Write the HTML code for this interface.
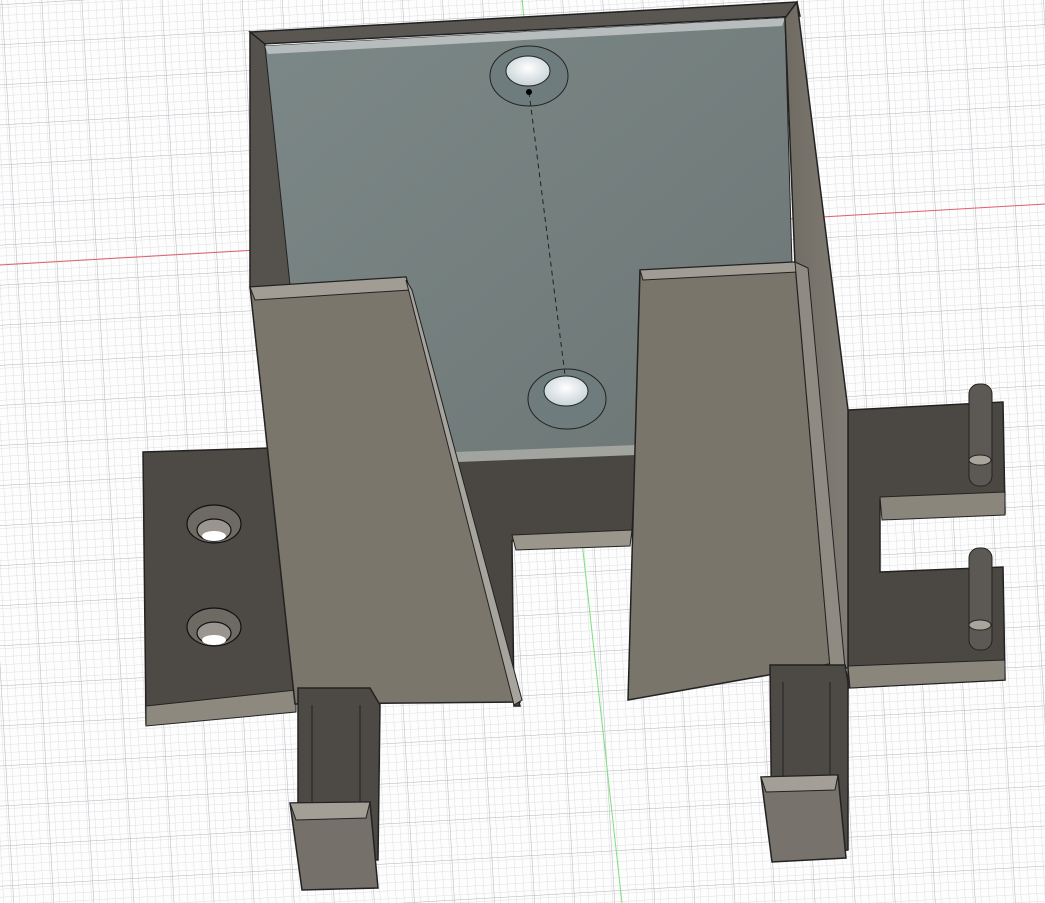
<!DOCTYPE html>
<html><head><meta charset="utf-8"><style>
html,body{margin:0;padding:0;background:#fff;}
svg{display:block}
</style></head><body>
<svg width="1045" height="903" viewBox="0 0 1045 903" xmlns="http://www.w3.org/2000/svg">
<defs>
<pattern id="minor" width="8" height="8" patternUnits="userSpaceOnUse" patternTransform="rotate(-3.3)">
<path d="M8 0V8M0 8H8" stroke="#d6d8dc" stroke-width="0.8" fill="none"/>
</pattern>
<pattern id="major" width="40" height="40" patternUnits="userSpaceOnUse" patternTransform="rotate(-3.3) translate(2 5)">
<path d="M40 0V40M0 40H40" stroke="#b0b3b8" stroke-width="1" fill="none"/>
</pattern>
<linearGradient id="panel" x1="0" y1="0" x2="1" y2="1">
<stop offset="0" stop-color="#7c8887"/><stop offset="1" stop-color="#6c7675"/>
</linearGradient>
<linearGradient id="wallR" x1="0" y1="0" x2="1" y2="0">
<stop offset="0" stop-color="#6f6b63"/><stop offset="1" stop-color="#827d74"/>
</linearGradient>
<radialGradient id="hole" cx="0.5" cy="0.4" r="0.6">
<stop offset="0" stop-color="#ffffff"/><stop offset="1" stop-color="#c8d2d6"/>
</radialGradient>
</defs>
<rect width="1045" height="903" fill="#fdfdfd"/>
<rect width="1045" height="903" fill="url(#minor)"/>
<rect width="1045" height="903" fill="url(#major)"/>
<line x1="0" y1="265" x2="1045" y2="204" stroke="#e0606a" stroke-width="1"/>
<line x1="522" y1="0" x2="622" y2="903" stroke="#7ee07e" stroke-width="1"/>

<polygon points="143,452 270,448 296,700 146,724" fill="#4d4a45" stroke="#222" stroke-width="1.5"/>
<polygon points="146,706 296,690 296,712 146,726" fill="#8d897f" stroke="#222" stroke-width="1"/>
<g stroke="#111" stroke-width="1.2">
<ellipse cx="214" cy="524" rx="27" ry="19" fill="#6d6963"/>
<ellipse cx="214" cy="530" rx="17" ry="11" fill="#9a968f"/>
<ellipse cx="214" cy="536" rx="12" ry="5" fill="#fff" stroke="none"/>
<ellipse cx="214" cy="627" rx="27" ry="19" fill="#6d6963"/>
<ellipse cx="214" cy="633" rx="17" ry="11" fill="#9a968f"/>
<ellipse cx="214" cy="640" rx="12" ry="5" fill="#fff" stroke="none"/>
</g>

<polygon points="848,410 1003,402 1005,513 880,500 880,572 1003,567 1005,680 848,688" fill="#4b4844" stroke="#222" stroke-width="1.5"/>
<polygon points="880,497 1005,492 1005,515 882,520" fill="#8a867c" stroke="#222" stroke-width="1"/>
<polygon points="848,666 1005,660 1005,680 850,688" fill="#8a867c" stroke="#222" stroke-width="1"/>
<g stroke="#222" stroke-width="1" fill="#5c5954">
<rect x="969" y="384" width="23" height="102" rx="10"/>
<rect x="969" y="548" width="23" height="102" rx="10"/>
</g>
<g stroke="#222" stroke-width="1" fill="#a9a59d">
<ellipse cx="980" cy="460" rx="11" ry="5"/>
<ellipse cx="980" cy="625" rx="11" ry="5"/>
</g>

<polygon points="250,32 797,2 800,16 262,44" fill="#5a5752" stroke="#222" stroke-width="1.5"/>
<polygon points="250,32 265,44 292,285 250,288" fill="#55524d" stroke="#222" stroke-width="1.5"/>
<polygon points="265,46 785,18 792,265 640,270 635,450 455,456 405,280 290,285" fill="url(#panel)" stroke="#222" stroke-width="1"/>
<polygon points="265,46 785,18 782,26 268,54" fill="#b7bcbc"/>
<polygon points="797,2 848,410 848,668 832,668 795,265 785,18" fill="url(#wallR)" stroke="#222" stroke-width="1.5"/>
<polygon points="455,456 636,449 632,536 512,541 514,706 520,706" fill="#4a4743" stroke="#222" stroke-width="1.5"/>
<polygon points="512,535 632,530 630,546 516,550" fill="#9a968c" stroke="#222" stroke-width="1"/>
<polygon points="455,452 636,445 636,455 458,462" fill="#a2a49f"/>

<g stroke="#222" stroke-width="1">
<ellipse cx="529" cy="76" rx="39" ry="30" fill="#6e7c7e"/>
<ellipse cx="528" cy="71" rx="22" ry="15" fill="url(#hole)"/>
<ellipse cx="567" cy="399" rx="39" ry="30" fill="#6e7c7e"/>
<ellipse cx="566" cy="391" rx="22" ry="15" fill="url(#hole)"/>
</g>
<line x1="529" y1="92" x2="565" y2="375" stroke="#222" stroke-width="1" stroke-dasharray="5,4"/>
<circle cx="529" cy="92" r="3" fill="#000"/>

<polygon points="250,287 406,277 520,702 295,704" fill="#7b766b" stroke="#222" stroke-width="1.5"/>
<polygon points="250,287 406,277 410,290 255,300" fill="#a19d94" stroke="#222" stroke-width="1"/>
<polygon points="406,280 412,290 522,700 514,705" fill="#a6a49d" stroke="#222" stroke-width="1"/>
<polygon points="640,270 795,262 830,664 628,700" fill="#7a756a" stroke="#222" stroke-width="1.5"/>
<polygon points="640,270 795,262 797,272 643,280" fill="#a19d94" stroke="#222" stroke-width="1"/>
<polygon points="795,262 808,268 845,668 830,668" fill="#8f8b82" stroke="#222" stroke-width="1"/>

<polygon points="298,688 370,688 380,705 378,860 298,855" fill="#4d4a45" stroke="#222" stroke-width="1.5"/>
<line x1="312" y1="705" x2="312" y2="840" stroke="#222"/>
<line x1="360" y1="705" x2="360" y2="840" stroke="#222"/>
<polygon points="290,803 370,802 378,888 302,890" fill="#75706a" stroke="#222" stroke-width="1.5"/>
<polygon points="290,803 370,802 366,818 296,820" fill="#a39f96" stroke="#222" stroke-width="1"/>
<polygon points="770,665 845,665 848,682 848,850 772,860" fill="#4d4a45" stroke="#222" stroke-width="1.5"/>
<line x1="783" y1="682" x2="783" y2="800" stroke="#222"/>
<line x1="830" y1="682" x2="830" y2="800" stroke="#222"/>
<polygon points="761,777 838,775 846,858 772,862" fill="#77726b" stroke="#222" stroke-width="1.5"/>
<polygon points="761,777 838,775 835,790 766,792" fill="#a39f96" stroke="#222" stroke-width="1"/>
</svg>
</body></html>
